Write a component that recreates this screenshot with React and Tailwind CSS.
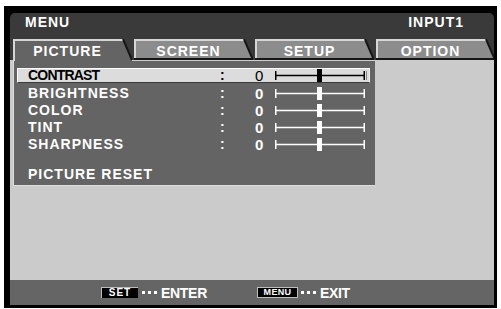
import React from "react";

function Tab({ label, active }) {
  return (
    <div className={`relative w-[119px] shrink-0 ${active ? "h-[22px] z-10" : "h-[21px]"}`}>
      <svg className="absolute left-0 top-0" width="119" height={active ? 22 : 21} viewBox={`0 0 119 ${active ? 22 : 21}`}>
        <polygon points={`0,${active ? 22 : 21} 0,0 110,0 119,21 119,${active ? 22 : 21}`} fill={active ? "#646464" : "#8c8c8c"} />
        <polyline points={`1,${active ? 22 : 21} 1,1 110,1`} stroke="#d6d6d6" strokeWidth="2" fill="none" />
        <line x1="110" y1="0" x2="119" y2="21" stroke="#151515" strokeWidth="2" />
        {!active && <line x1="0" y1="20" x2="119" y2="20" stroke="#151515" strokeWidth="2" />}
      </svg>
      <span className="relative flex h-[21px] items-center justify-center pr-[10px] pt-[2px] text-[14px] font-bold leading-[16px] tracking-[1px] text-white">
        {label}
      </span>
    </div>
  );
}

function Slider({ dark, h }) {
  const c = dark ? "#000" : "#fff";
  const mid = h / 2;
  return (
    <svg width="94" height={h} viewBox={`0 0 94 ${h}`} className="shrink-0">
      <line x1="0" y1={mid} x2="89" y2={mid} stroke={c} strokeWidth="1.5" />
      <line x1="0.75" y1={mid - 4.5} x2="0.75" y2={mid + 4.5} stroke={c} strokeWidth="1.5" />
      <line x1="89.25" y1={mid - 4.5} x2="89.25" y2={mid + 4.5} stroke={c} strokeWidth="1.5" />
      {dark && <line x1="91.5" y1={mid - 4.5} x2="91.5" y2={mid + 4.5} stroke="#888" strokeWidth="1" />}
      <rect x="42" y={mid - 6.5} width="5" height="13" fill={c} />
    </svg>
  );
}

function Row({ label }) {
  return (
    <div className="flex h-[17px] items-center pl-[14px] text-white">
      <span className="w-[192px] text-[14px] font-bold leading-[17px] tracking-[1px]">{label}</span>
      <span className="w-[35px] text-[14px] font-bold leading-[17px]">:</span>
      <span className="w-[20px] text-[15px] font-bold leading-[17px]">0</span>
      <Slider h={17} />
    </div>
  );
}

function Dots() {
  return (
    <span className="flex gap-[3px]">
      <span className="h-[3px] w-[3px] bg-white" />
      <span className="h-[3px] w-[3px] bg-white" />
      <span className="h-[3px] w-[3px] bg-white" />
    </span>
  );
}

export default function App() {
  return (
    <div className="min-h-[309px] bg-white pl-[4px] pt-[6px] font-['Liberation_Sans',Arial,sans-serif]">
      <div className="h-[302px] w-[493px] bg-black pb-[3px] pl-[6px] pr-[3px] pt-[7px]">
        <div className="flex h-[292px] w-[484px] flex-col overflow-hidden">
          {/* header */}
          <div className="flex h-[47px] shrink-0 flex-col rounded-t-[5px] bg-[#3a3a3a]">
            <div className="flex h-[26px] items-start justify-between pl-[15px] pr-[30px] pt-[1px] text-[14px] font-bold leading-[16px] tracking-[1px] text-white">
              <span>MENU</span>
              <span>INPUT1</span>
            </div>
            <div className="flex h-[21px] items-start gap-[2px] pl-[3px]">
              <Tab label="PICTURE" active />
              <Tab label="SCREEN" />
              <Tab label="SETUP" />
              <Tab label="OPTION" />
            </div>
          </div>

          {/* body */}
          <div className="h-[220px] shrink-0 bg-[#cbcbcb] pl-[3px]">
            <div className="h-[126px] w-[362px] border-b border-l border-t border-b-[#dedede] border-l-[#dcdcdc] border-t-[#cfcfcf] bg-[#646464] pl-[3px] pt-[7px]">
              <div className="flex h-[15px] w-[353px] items-center border-b border-l border-r border-t border-b-[#3a3a3a] border-l-white border-r-[#eeeeee] border-t-white bg-[#dcdcdc] pl-[10px] text-black">
                <span className="w-[192px] text-[14px] font-bold leading-[13px] tracking-[-0.8px]">CONTRAST</span>
                <span className="w-[35px] text-[14px] font-bold leading-[13px]">:</span>
                <span className="w-[20px] text-[15px] font-normal leading-[13px]">0</span>
                <Slider dark h={13} />
              </div>
              <div className="mt-[2px] -ml-[3px]">
                <Row label="BRIGHTNESS" />
                <Row label="COLOR" />
                <Row label="TINT" />
                <Row label="SHARPNESS" />
                <div className="mt-[13px] flex h-[17px] items-center pl-[14px] text-[14px] font-bold leading-[17px] tracking-[1px] text-white">
                  PICTURE RESET
                </div>
              </div>
            </div>
          </div>

          {/* footer */}
          <div className="flex h-[25px] shrink-0 items-center bg-[#656565] pl-[91px] text-white">
            <span className="flex h-[11px] w-[37px] items-center justify-center border-l border-t border-l-[#bdbdbd] border-t-[#bdbdbd] bg-black text-[10px] font-bold leading-[10px] tracking-[1px]">
              SET
            </span>
            <span className="ml-[4px]">
              <Dots />
            </span>
            <span className="ml-[4px] text-[14px] font-bold leading-[16px] tracking-[-0.3px]">ENTER</span>
            <span className="ml-[50px] flex h-[11px] w-[41px] items-center justify-center border border-[#bdbdbd] bg-black text-[9px] font-bold leading-[9px] tracking-[0.3px]">
              MENU
            </span>
            <span className="ml-[3px]">
              <Dots />
            </span>
            <span className="ml-[4px] text-[14px] font-bold leading-[16px] tracking-[-0.3px]">EXIT</span>
          </div>
        </div>
      </div>
    </div>
  );
}
